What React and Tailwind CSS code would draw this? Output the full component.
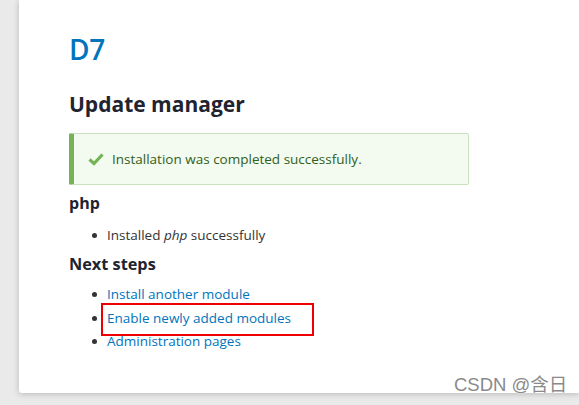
import React from "react";

function Check() {
  return (
    <svg width="16" height="14" viewBox="0 0 16 14" className="shrink-0">
      <path d="M1.5 7.5 L6 11.5 L14.5 2.5" fill="none" stroke="#73b355" strokeWidth="3.2" strokeLinecap="butt" strokeLinejoin="miter" />
    </svg>
  );
}

function Bullet() {
  return <span className="w-[5px] h-[5px] rounded-full bg-[#333] mr-[10px] shrink-0" />;
}

export default function App() {
  const font = { fontFamily: '"Open Sans", "Noto Sans", sans-serif' };
  return (
    <div className="w-[579px] h-[405px] bg-[#e9eae9] overflow-hidden relative" style={font}>
      <div className="ml-[19px] h-[393px] bg-white rounded-bl-[3px] shadow-[0_1px_6px_rgba(0,0,0,0.22)] pl-[50px] pt-[29px] text-[#333]">
        <h1 className="text-[28px] leading-[40px] font-semibold text-[#0074bd] tracking-[-0.2px]">D7</h1>
        <h2 className="mt-[20px] text-[21px] leading-[30px] font-bold text-[#222330]">Update manager</h2>
        <div className="mt-[14px] w-[400px] h-[52px] flex items-center bg-[#f3faef] border border-[#c9e1bd] border-l-[5px] border-l-[#77b259] rounded-[2px] pl-[14px]">
          <Check />
          <span className="ml-[8px] text-[13.5px] text-[#325e1c]">Installation was completed successfully.</span>
        </div>
        <h3 className="mt-[6px] text-[16px] leading-[24px] font-bold text-[#222330]">php</h3>
        <ul className="mt-[8px] pl-[23px] text-[13.5px] leading-[24px]">
          <li className="flex items-center">
            <Bullet />
            <span>Installed <em>php</em> successfully</span>
          </li>
        </ul>
        <h3 className="mt-[5px] text-[16.3px] leading-[24px] font-bold text-[#222330]">Next steps</h3>
        <ul className="mt-[7px] pl-[23px] text-[13.5px] leading-[23.5px] text-[#0074bd]">
          <li className="flex items-center">
            <Bullet />
            <a>Install another module</a>
          </li>
          <li className="flex items-center">
            <Bullet />
            <a>Enable newly added modules</a>
          </li>
          <li className="flex items-center">
            <Bullet />
            <a>Administration pages</a>
          </li>
        </ul>
      </div>
      <div className="absolute left-[101px] top-[303px] w-[213px] h-[33px] border-2 border-[#ee0000]" />
      <div
        className="absolute left-[454px] top-[375px] text-[18.5px] leading-[20px] text-[#8a8a8a]"
        style={{ fontFamily: '"Liberation Sans", "Noto Sans CJK SC", sans-serif', textShadow: "0 0 2px #fff, 0 0 1px #fff" }}
      >
        CSDN @含日
      </div>
    </div>
  );
}
